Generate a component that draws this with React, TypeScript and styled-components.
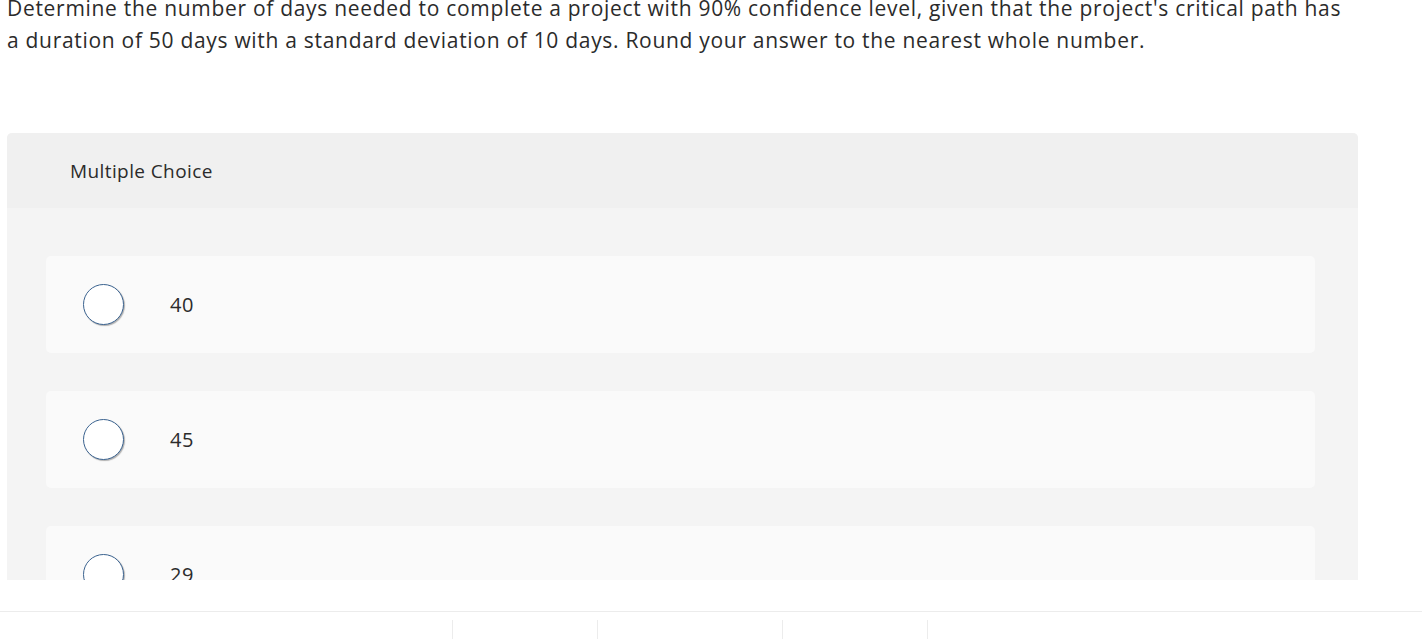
import React from "react";
import styled, { createGlobalStyle } from "styled-components";

const Global = createGlobalStyle`
  html, body { margin: 0; padding: 0; background: #ffffff; overflow: hidden; }
  body { font-family: "Open Sans", "Liberation Sans", sans-serif; color: #2b2b2b; }
`;

const Page = styled.div`
  width: 1422px;
  height: 639px;
  display: flex;
  flex-direction: column;
  overflow: hidden;
`;

const Content = styled.div`
  padding-left: 7px;
  display: flex;
  flex-direction: column;
`;

const Question = styled.p`
  margin: -8px 0 0 0;
  font-size: 21px;
  line-height: 32px;
  letter-spacing: 0.7px;
  color: #2b2b2b;
  white-space: nowrap;
`;

const Panel = styled.section`
  margin-top: 77px;
  width: 1351px;
  height: 447px;
  border-radius: 5px 5px 0 0;
  overflow: hidden;
  background: #f4f4f4;
  display: flex;
  flex-direction: column;
`;

const PanelHeader = styled.div`
  height: 75px;
  flex: none;
  background: #f0f0f0;
  display: flex;
  align-items: center;
  padding-left: 63px;
  font-size: 19px;
  letter-spacing: 0.4px;
  color: #2b2b2b;
`;

const PanelBody = styled.div`
  padding: 48px 43px 0 39px;
  display: flex;
  flex-direction: column;
  gap: 38px;
`;

const Choice = styled.label`
  height: 97px;
  flex: none;
  border-radius: 5px;
  background: #fafafa;
  display: flex;
  align-items: center;
  padding-left: 37px;
  gap: 46px;
  cursor: pointer;
`;

const Radio = styled.span`
  width: 41px;
  height: 41px;
  box-sizing: border-box;
  border-radius: 50%;
  border: 1.5px solid #3b6390;
  background: #ffffff;
  box-shadow: 1px 1px 1px rgba(0, 0, 0, 0.3);
  flex: none;
`;

const ChoiceText = styled.span`
  font-size: 20px;
  letter-spacing: 0.5px;
  color: #2b2b2b;
`;

const Footer = styled.footer`
  margin-top: 31px;
  border-top: 1px solid #ececec;
  display: flex;
  padding: 8px 0 0 452px;
  height: 30px;
`;

const FooterCell = styled.div<{ $w: number; $last?: boolean }>`
  width: ${(p) => p.$w}px;
  border-left: 1px solid #ececec;
  ${(p) => (p.$last ? "border-right: 1px solid #ececec;" : "")}
`;

const choices = ["40", "45", "29"];

export default function App() {
  return (
    <Page>
      <Global />
      <Content>
        <Question>
          Determine the number of days needed to complete a project with 90% confidence level, given that the project's critical path has
          <br />
          a duration of 50 days with a standard deviation of 10 days. Round your answer to the nearest whole number.
        </Question>
        <Panel>
          <PanelHeader>Multiple Choice</PanelHeader>
          <PanelBody>
            {choices.map((c) => (
              <Choice key={c}>
                <Radio />
                <ChoiceText>{c}</ChoiceText>
              </Choice>
            ))}
          </PanelBody>
        </Panel>
      </Content>
      <Footer>
        <FooterCell $w={144} />
        <FooterCell $w={184} />
        <FooterCell $w={144} $last />
      </Footer>
    </Page>
  );
}
